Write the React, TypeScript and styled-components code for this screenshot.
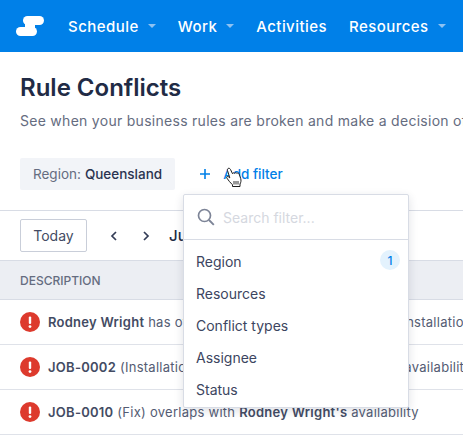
import React from 'react';
import styled, { createGlobalStyle } from 'styled-components';

const GlobalStyle = createGlobalStyle`
  html, body {
    margin: 0;
    padding: 0;
    width: 463px;
    height: 438px;
    overflow: hidden;
    background: #fff;
    font-family: Inter, "Liberation Sans", sans-serif;
  }
`;

const Page = styled.div`
  position: relative;
  width: 463px;
  height: 438px;
  overflow: hidden;
`;

const Nav = styled.nav`
  display: flex;
  align-items: center;
  height: 52px;
  padding-left: 16px;
  background: #0080e8;
  white-space: nowrap;
`;

const Logo = styled.svg`
  flex: none;
  width: 28px;
  height: 20px;
  margin-right: 24px;
`;

const NavItem = styled.div`
  display: flex;
  flex: none;
  align-items: center;
  margin-right: 22px;
  color: #fff;
  font-size: 15px;
  font-weight: 500;
  letter-spacing: 0.45px;
`;

const Caret = styled.span`
  width: 0;
  height: 0;
  margin-left: 9px;
  border-left: 4px solid transparent;
  border-right: 4px solid transparent;
  border-top: 4px solid #8dc2f2;
`;

const Intro = styled.header`
  padding: 21px 20px 0;
  white-space: nowrap;
`;

const Title = styled.h1`
  margin: 0;
  color: #212b45;
  font-size: 24px;
  font-weight: 600;
  line-height: 30px;
`;

const Subtitle = styled.p`
  margin: 8px 0 0;
  color: #656c80;
  font-size: 14px;
  line-height: 20px;
  letter-spacing: 0.28px;
`;

const FilterBar = styled.div`
  display: flex;
  align-items: center;
  height: 32px;
  margin-top: 27px;
  padding: 0 20px 20px;
  border-bottom: 1px solid #d8dce5;
`;

const Chip = styled.div`
  display: flex;
  align-items: center;
  gap: 4px;
  height: 32px;
  padding: 0 13px;
  border-radius: 2px;
  background: #f2f4f8;
  color: #656c80;
  font-size: 13.5px;
`;

const ChipValue = styled.span`
  color: #2a3350;
  font-weight: 500;
`;

const AddFilter = styled.div`
  display: flex;
  align-items: center;
  gap: 12px;
  margin-left: 24px;
  color: #0080e8;
  font-size: 13.5px;
  font-weight: 500;
`;

const Toolbar = styled.div`
  display: flex;
  align-items: center;
  height: 49px;
  padding-left: 20px;
  border-bottom: 1px solid #d8dce5;
`;

const TodayButton = styled.button`
  width: 67px;
  height: 33px;
  padding: 0;
  border: 1px solid #c9ced9;
  border-radius: 2px;
  background: #fff;
  color: #434b63;
  font-family: inherit;
  font-size: 14px;
`;

const Chevron = styled.svg`
  flex: none;
  width: 10px;
  height: 12px;
  margin-left: 22px;
`;

const Month = styled.span`
  margin-left: 18px;
  color: #212b45;
  font-size: 15px;
  font-weight: 500;
`;

const TableHead = styled.div`
  display: flex;
  align-items: center;
  height: 38px;
  padding-left: 20px;
  border-bottom: 1px solid #d8dce5;
  background: #eceef3;
  color: #656c80;
  font-size: 12px;
  font-weight: 500;
`;

const Row = styled.div`
  display: flex;
  align-items: center;
  gap: 8px;
  height: 44px;
  padding-left: 20px;
  border-bottom: 1px solid #dfe2e9;
  color: #545c73;
  font-size: 13px;
  letter-spacing: 0.26px;
  white-space: nowrap;
`;

const AlertIcon = styled.svg`
  flex: none;
  width: 20px;
  height: 20px;
`;

const Strong = styled.strong`
  color: #434b63;
  font-weight: 600;
`;

const Menu = styled.div`
  position: absolute;
  top: 194px;
  left: 183px;
  z-index: 2;
  box-sizing: border-box;
  width: 226px;
  height: 214px;
  border: 1px solid #d8dce5;
  border-radius: 2px;
  background: #fff;
  box-shadow: 0 3px 10px rgba(33, 43, 69, 0.14);
`;

const SearchRow = styled.div`
  display: flex;
  align-items: center;
  gap: 8px;
  height: 44px;
  padding-left: 13px;
  border-bottom: 1px solid #d8dce5;
  color: #d5d8e0;
  font-size: 14px;
`;

const SearchIcon = styled.svg`
  flex: none;
  width: 18px;
  height: 18px;
`;

const MenuList = styled.div`
  padding-top: 5px;
`;

const MenuItem = styled.div`
  display: flex;
  align-items: center;
  justify-content: space-between;
  height: 32px;
  padding: 0 8px 0 12px;
  color: #3c4560;
  font-size: 14px;
`;

const Badge = styled.span`
  display: flex;
  align-items: center;
  justify-content: center;
  width: 20px;
  height: 20px;
  margin-top: -2px;
  border-radius: 50%;
  background: #e3f2fd;
  color: #0080e8;
  font-size: 12px;
  font-weight: 500;
`;

const Cursor = styled.svg`
  position: absolute;
  top: 167px;
  left: 225px;
  z-index: 3;
  width: 18px;
  height: 21px;
`;

const menuItems = ['Region', 'Resources', 'Conflict types', 'Assignee', 'Status'];

const Alert: React.FC = () => (
  <AlertIcon viewBox="0 0 20 20">
    <circle cx="10" cy="10" r="10" fill="#dd3a2d" />
    <rect x="8.8" y="4.5" width="2.4" height="7.5" rx="1" fill="#fff" />
    <circle cx="10" cy="14.6" r="1.4" fill="#fff" />
  </AlertIcon>
);

const App: React.FC = () => (
  <Page>
    <GlobalStyle />
    <Nav>
      <Logo viewBox="0 0 28 20">
        <rect x="7" y="0" width="21" height="9" rx="4.5" fill="#fff" />
        <rect x="0" y="11" width="21" height="9" rx="4.5" fill="#fff" />
        <rect x="9" y="7" width="10" height="6" fill="#fff" />
      </Logo>
      <NavItem>
        Schedule
        <Caret />
      </NavItem>
      <NavItem>
        Work
        <Caret />
      </NavItem>
      <NavItem>Activities</NavItem>
      <NavItem>
        Resources
        <Caret />
      </NavItem>
    </Nav>
    <Intro>
      <Title>Rule Conflicts</Title>
      <Subtitle>See when your business rules are broken and make a decision of what to do</Subtitle>
    </Intro>
    <FilterBar>
      <Chip>
        Region:
        <ChipValue>Queensland</ChipValue>
      </Chip>
      <AddFilter>
        <svg width="12" height="12" viewBox="0 0 12 12">
          <path d="M6 1v10M1 6h10" stroke="#0080e8" strokeWidth="1.6" fill="none" />
        </svg>
        Add filter
      </AddFilter>
    </FilterBar>
    <Toolbar>
      <TodayButton>Today</TodayButton>
      <Chevron viewBox="0 0 10 12">
        <path d="M7 2 3 6l4 4" stroke="#333c56" strokeWidth="1.7" fill="none" />
      </Chevron>
      <Chevron viewBox="0 0 10 12">
        <path d="m3 2 4 4-4 4" stroke="#333c56" strokeWidth="1.7" fill="none" />
      </Chevron>
      <Month>June 2021</Month>
    </Toolbar>
    <TableHead>DESCRIPTION</TableHead>
    <Row>
      <Alert />
      <span>
        <Strong>Rodney Wright</Strong> has overlapping availability <Strong>JOB-0002</Strong> (Installation)
      </span>
    </Row>
    <Row>
      <Alert />
      <span>
        <Strong>JOB-0002</Strong> (Installation) overlaps with <Strong>Rodney Wright's</Strong> availability
      </span>
    </Row>
    <Row>
      <Alert />
      <span>
        <Strong>JOB-0010</Strong> (Fix) overlaps with <Strong>Rodney Wright's</Strong> availability
      </span>
    </Row>
    <Menu>
      <SearchRow>
        <SearchIcon viewBox="0 0 18 18">
          <circle cx="7.5" cy="7.5" r="6" stroke="#7d8497" strokeWidth="1.7" fill="none" />
          <path d="m12 12 4.8 4.8" stroke="#7d8497" strokeWidth="1.9" fill="none" />
        </SearchIcon>
        Search filter...
      </SearchRow>
      <MenuList>
        {menuItems.map((item) => (
          <MenuItem key={item}>
            {item}
            {item === 'Region' && <Badge>1</Badge>}
          </MenuItem>
        ))}
      </MenuList>
    </Menu>
    <Cursor viewBox="0 0 18 21">
      <path
        d="M3 1.5c1-.6 2 0 2.500 1l2 4.200c.2-1 1.600-1.200 2.200-.3.3-.8 1.700-.9 2.200 0 .6-.6 1.800-.4 2.200.5l1.600 4.600c.6 2.200.2 4-.7 5.500v2.500H7.500v-1.700C5.500 16 3.500 13.500 1.800 11c-.6-1 .5-2 1.500-1.300l1.500 1.200L2.500 3.500c-.2-.8 0-1.600.5-2z"
        fill="#fff"
        stroke="#1d1d1d"
        strokeWidth="1"
        strokeLinejoin="round"
      />
      <path d="M9 14v3.500M11 14v3.500M13 14v3.500" stroke="#333" strokeWidth="1" fill="none" />
    </Cursor>
  </Page>
);

export default App;
